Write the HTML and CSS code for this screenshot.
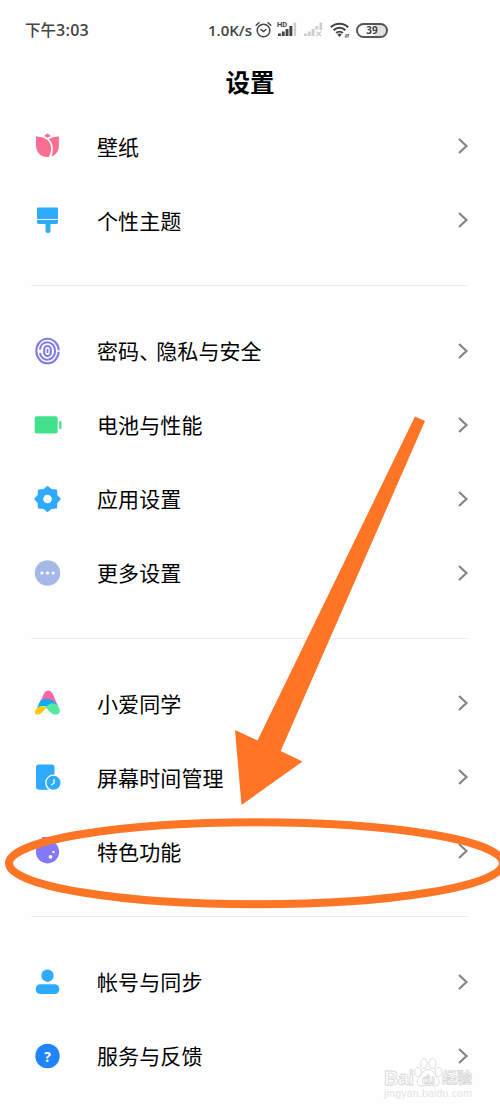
FILE: index.html
```html
<!DOCTYPE html>
<html lang="zh-CN">
<head>
  <meta charset="UTF-8" />
  <meta name="viewport" content="width=device-width, initial-scale=1.0" />
  <title>设置</title>
  <link rel="stylesheet" href="styles.css">
</head>
<body>

  <div class="status-bar">
    <div class="time">下午<span class="digits">3:03</span></div>
    <div class="status-right">
      <span class="speed">1.0K/s</span>
      <svg class="alarm" width="17" height="18" viewBox="0 0 17 18" fill="none" stroke="#444" stroke-width="1.5" stroke-linecap="round">
        <circle cx="8.5" cy="9.5" r="6.3" />
        <path d="M1.2 4.2 4 1.8M15.8 4.2 13 1.8M6 8.5l2.5 2 2.5-2" />
      </svg>
      <svg class="signal" width="20" height="16" viewBox="0 0 20 16">
        <text class="hd" x="0" y="6">HD</text>
        <path fill="#444" d="M1 12.500h2.900V15H1zM4.800 10.500h2.900V15H4.800zM8.600 8h2.900v7H8.600zM12.400 5h2.900v10h-2.900z" />
        <path fill="#ccc" d="M16.700 1.500h2.400V15h-2.400z" />
      </svg>
      <svg class="signal-off" width="20" height="16" viewBox="0 0 20 16">
        <path fill="#ccc" d="M1 12.500h2.900V15H1zM4.800 10.500h2.900V15H4.800zM8.600 8h2.900v7H8.600zM12.400 5h2.900v3.500h-2.900zM16.500 1.500h2.600V9h-2.600z" />
        <path stroke="#ccc" stroke-width="1.500" d="m13.500 10.500 4.500 4.500m0-4.500-4.500 4.500" />
      </svg>
      <svg class="wifi" width="20" height="16" viewBox="0 0 20 16" fill="none" stroke="#444" stroke-width="2.1">
        <path d="M.8 5.300a12.500 12.500 0 0 1 17.400 0M3.600 8.200a8.500 8.500 0 0 1 11.800 0M6.200 11a4.800 4.800 0 0 1 6.600 0" />
        <path fill="#444" stroke="none" d="M7.300 12.500a3.200 3.200 0 0 1 4.400 0l-2.200 2.400z" />
        <path stroke-width="1" d="M16 12v3.500m-1-1 1 1M18 15.500V12m1 1-1-1" />
      </svg>
      <span class="battery">39</span>
    </div>
  </div>

  <h1 class="title">设置</h1>

  <div class="settings">
    <div class="row">
      <svg class="icon" viewBox="0 0 28 28" fill="#fc6e8f">
        <path d="M14 1.400c1.200.6 2.300 1.500 3.200 2.600L14 5.700 10.800 4c.9-1.100 2-2 3.200-2.600z" />
        <path d="M2.500 4.500c4 0 7.800 1 10.700 3.100 3.500 2.500 4.800 6.400 4.300 10.400-.3 2.400-.9 4.700-2 6.900-7.700.5-13-3.900-13-11.900z" />
        <path d="M15.200 7.100c2.800-1.700 6.200-2.600 10.200-2.600V13c0 6.200-3 10-7.600 11.400 1.200-2.800 1.700-5.700 1.500-8.600-.2-3.500-1.500-6.500-4.100-8.700z" />
      </svg>
      <span class="label">壁纸</span>
      <svg class="arrow" viewBox="0 0 12 18"><path d="m2 2 7.500 7L2 16" /></svg>
    </div>
    <div class="row">
      <svg class="icon" viewBox="0 0 28 28" fill="#2eaaff">
        <path d="M4.500 1.500h19q1 0 1 1V13h-21V2.500q0-1 1-1z" />
        <path d="M3.500 14h21v2.300q0 1.700-1.700 1.700H17v6.500a2.500 2.500 0 0 1-5 0V18H5.200q-1.700 0-1.700-1.700z" />
      </svg>
      <span class="label">个性主题</span>
      <svg class="arrow" viewBox="0 0 12 18"><path d="m2 2 7.500 7L2 16" /></svg>
    </div>

    <div class="divider"></div>

    <div class="row">
      <svg class="icon" viewBox="0 0 28 28" fill="none" stroke="#817be5" stroke-width="2.1">
        <ellipse cx="14" cy="14" rx="11.200" ry="12.300" />
        <path d="M6.400 12.500C7 8.300 10 5.300 14 5.300s7.600 3.500 7.600 8.700-3.600 8.700-7.600 8.700-7-3-7.500-6.700" />
        <rect x="10.700" y="9" width="6.600" height="10" rx="3.300" />
        <path d="M14 12v4" stroke-width="1.800" />
        <path d="M23 14h4" stroke="#fefefe" stroke-width="1.500" />
      </svg>
      <span class="label">密码<span class="comma">、</span>隐私与安全</span>
      <svg class="arrow" viewBox="0 0 12 18"><path d="m2 2 7.500 7L2 16" /></svg>
    </div>
    <div class="row">
      <svg class="icon" viewBox="0 0 28 28" fill="#43e18b">
        <rect x="1.200" y="5.300" width="23" height="17.200" rx="2" />
        <rect x="25.700" y="10" width="2.300" height="8" rx="1" />
      </svg>
      <span class="label">电池与性能</span>
      <svg class="arrow" viewBox="0 0 12 18"><path d="m2 2 7.500 7L2 16" /></svg>
    </div>
    <div class="row">
      <svg class="icon" viewBox="0 0 28 28">
        <path fill="#2eaaff" stroke="#2eaaff" stroke-width="2" stroke-linejoin="round" d="m14 1.900 3.500 3.200 5.100.3.300 5.100 3.200 3.500-3.200 3.500-.3 5.100-5.100.3-3.500 3.200-3.500-3.200-5.100-.3-.3-5.100L1.900 14l3.200-3.500.3-5.100 5.100-.3z" />
        <circle cx="14" cy="14" r="4.300" fill="#fff" />
      </svg>
      <span class="label">应用设置</span>
      <svg class="arrow" viewBox="0 0 12 18"><path d="m2 2 7.500 7L2 16" /></svg>
    </div>
    <div class="row">
      <svg class="icon" viewBox="0 0 28 28" fill="#fff">
        <circle cx="14" cy="14" r="12.700" fill="#a5b9e8" />
        <circle cx="8.400" cy="14" r="1.600" />
        <circle cx="14" cy="14" r="1.600" />
        <circle cx="19.600" cy="14" r="1.600" />
      </svg>
      <span class="label">更多设置</span>
      <svg class="arrow" viewBox="0 0 12 18"><path d="m2 2 7.500 7L2 16" /></svg>
    </div>

    <div class="divider"></div>

    <div class="row">
      <svg class="icon" viewBox="0 0 28 28">
        <path fill="#fb68a8" d="M7 12.500 10.200 5q1.600-3.500 4.500-3.500T19.400 5l4.600 11c-4-2-8-5-17-3.500z" />
        <path fill="#16aaf2" d="M3.300 19 7 11.600c2.400-2 5.500-2.300 8.500-1.400 4.500 1.200 7.300 3.400 9 6.800-4-1-7.500-.8-10 1.500-3-2-7.500-1.700-11.200.5z" />
        <path fill="#fcc90c" d="M1.700 22.200q1.800-4.500 5.200-4.900c2.500-.4 4.400 0 6.300 1.100-1.800 1.500-3.600 4.500-5.900 6-3.300 2.200-7 .9-5.600-2.200z" />
        <path fill="#55e9a0" d="M12 18.400c2.200-2.700 5.200-4.500 8.500-4 2.700.5 4.200 2.400 5.400 5.200 1.700 4-.8 6-4 6-4.400 0-6.900-5.200-9.900-7.200z" />
      </svg>
      <span class="label">小爱同学</span>
      <svg class="arrow" viewBox="0 0 12 18"><path d="m2 2 7.500 7L2 16" /></svg>
    </div>
    <div class="row">
      <svg class="icon" viewBox="0 0 28 28">
        <rect x="2.500" y="1.500" width="18.500" height="25.200" rx="3" fill="#2eaaff" />
        <circle cx="20" cy="19.800" r="7.700" fill="#2eaaff" stroke="#fff" stroke-width="1.300" />
        <path d="M20.500 16v4.200l-2.700 1.800" fill="none" stroke="#fff" stroke-width="1.300" />
      </svg>
      <span class="label">屏幕时间管理</span>
      <svg class="arrow" viewBox="0 0 12 18"><path d="m2 2 7.500 7L2 16" /></svg>
    </div>
    <div class="row">
      <svg class="icon" viewBox="0 0 28 28">
        <path fill="#8278f8" d="M8.500 0h11v4.600a11.600 11.600 0 1 1-11 0z" />
        <circle cx="17" cy="19.800" r="1.900" fill="#fff" />
        <circle cx="20" cy="15" r="1.200" fill="#fff" />
      </svg>
      <span class="label">特色功能</span>
      <svg class="arrow" viewBox="0 0 12 18"><path d="m2 2 7.500 7L2 16" /></svg>
    </div>

    <div class="divider"></div>

    <div class="row">
      <svg class="icon" viewBox="0 0 28 28" fill="#2eaaff">
        <circle cx="14" cy="7.700" r="6.200" />
        <rect x="2.300" y="16.300" width="23.400" height="9.700" rx="4.400" />
      </svg>
      <span class="label">帐号与同步</span>
      <svg class="arrow" viewBox="0 0 12 18"><path d="m2 2 7.500 7L2 16" /></svg>
    </div>
    <div class="row">
      <svg class="icon" viewBox="0 0 28 28">
        <circle cx="14" cy="14" r="12.200" fill="#2083ff" />
        <text class="question" x="14" y="19.500" text-anchor="middle">?</text>
      </svg>
      <span class="label">服务与反馈</span>
      <svg class="arrow" viewBox="0 0 12 18"><path d="m2 2 7.500 7L2 16" /></svg>
    </div>
  </div>

  <!-- watermark -->
  <svg class="watermark" width="94" height="48" viewBox="0 0 94 48">
    <g class="paw">
      <ellipse cx="37" cy="17" rx="3.300" ry="4.500" />
      <ellipse cx="43" cy="8.500" rx="3.300" ry="4.800" />
      <ellipse cx="51.500" cy="8.500" rx="3.300" ry="4.800" />
      <ellipse cx="57.500" cy="17" rx="3.300" ry="4.500" />
      <path d="M47.200 14.500c5 0 6 4.500 9 8 4 4.500 1.500 9-3 8.500-4-.8-8-.8-12 0-4.500.5-7-4-3-8.500 3-3.500 4-8 9-8z" />
    </g>
    <text class="brand" x="3" y="30" textLength="30">Bai</text>
    <text class="brand du" x="41" y="28.500" textLength="13">du</text>
    <text class="brand cn" x="61" y="28" textLength="30">经验</text>
    <text class="site" x="3" y="42" textLength="88">jingyan.baidu.com</text>
  </svg>

  <!-- pointer and circle over the list -->
  <svg class="marks" width="500" height="1111" viewBox="0 0 500 1111">
    <path fill="#ff7526" d="M415 416.500 425 421 280.700 751 302.500 761.500 241.500 805 235 730 257.500 740.500z" />
    <ellipse cx="256" cy="863.300" rx="247" ry="41" fill="none" stroke="#ff7526" stroke-width="8" />
  </svg>

</body>
</html>
```

FILE: styles.css
```css
* {
  box-sizing: border-box;
}

body {
  margin: 0;
  position: relative;
  height: 1111px;
  overflow: hidden;
  font-family: "Noto Sans CJK SC", sans-serif;
  background: #fefefe;
  color: #000;
}

.status-bar {
  display: flex;
  justify-content: space-between;
  align-items: center;
  height: 60px;
  padding: 0 112px 0 25px;
  color: #444;
}

.time {
  font-size: 15.5px;
  font-weight: 500;
  line-height: 24px;
  padding-bottom: 2px;
}

.digits {
  font-family: "Open Sans", sans-serif;
  font-size: 16px;
  font-weight: 600;
  letter-spacing: 0.3px;
}

.status-right {
  display: flex;
  align-items: center;
}

.speed {
  font-family: "Open Sans", sans-serif;
  font-size: 15px;
  font-weight: 600;
  line-height: 24px;
  margin-right: 3px;
  padding-bottom: 1px;
}

.alarm {
  margin-bottom: 1px;
}

.signal {
  margin: 0 0 2px 5px;
}

.hd {
  font: bold 7.5px Roboto, sans-serif;
  fill: #444;
}

.signal-off {
  margin: 0 0 2px 6px;
}

.wifi {
  margin-left: 7px;
}

.battery {
  width: 32px;
  height: 15px;
  margin-left: 6px;
  border: 2px solid #555;
  border-radius: 8px;
  background: linear-gradient(90deg, #fefefe 60%, #e2e2e2 60%);
  font: bold 10px/11px "Open Sans", sans-serif;
  text-align: center;
}

.title {
  height: 49px;
  margin: 0;
  font-size: 24.5px;
  font-weight: 700;
  line-height: 43px;
  text-align: center;
}

.row {
  display: flex;
  align-items: center;
  height: 74px;
  padding: 0 31px 0 33px;
}

.icon {
  width: 29px;
  height: 28px;
}

.label {
  flex: 1;
  margin-left: 35px;
  padding-bottom: 1px;
  font-size: 21px;
  letter-spacing: 0.1px;
  line-height: 30px;
}

.comma {
  letter-spacing: -4px;
}

.arrow {
  width: 12px;
  height: 18px;
  fill: none;
  stroke: #858585;
  stroke-width: 2.2;
}

.divider {
  height: 1px;
  margin: 28px 32px 27.5px 31px;
  background: #ececec;
}

.question {
  font: bold 14px "Open Sans", sans-serif;
  fill: #fff;
}

.watermark {
  position: absolute;
  left: 381px;
  top: 1055px;
}

.paw {
  fill: #fefefe;
  stroke: #dedede;
}

.brand {
  font: bold 20px "Liberation Sans", sans-serif;
  fill: #fefefe;
  stroke: #d6d6d6;
  stroke-width: 0.8;
}

.du {
  font-size: 13px;
}

.cn {
  font: bold 15px/1 "Noto Sans CJK SC", sans-serif;
}

.site {
  font: 10.5px "Liberation Sans", sans-serif;
  fill: #e2e2e2;
}

.marks {
  position: absolute;
  left: 0;
  top: 0;
}
```
